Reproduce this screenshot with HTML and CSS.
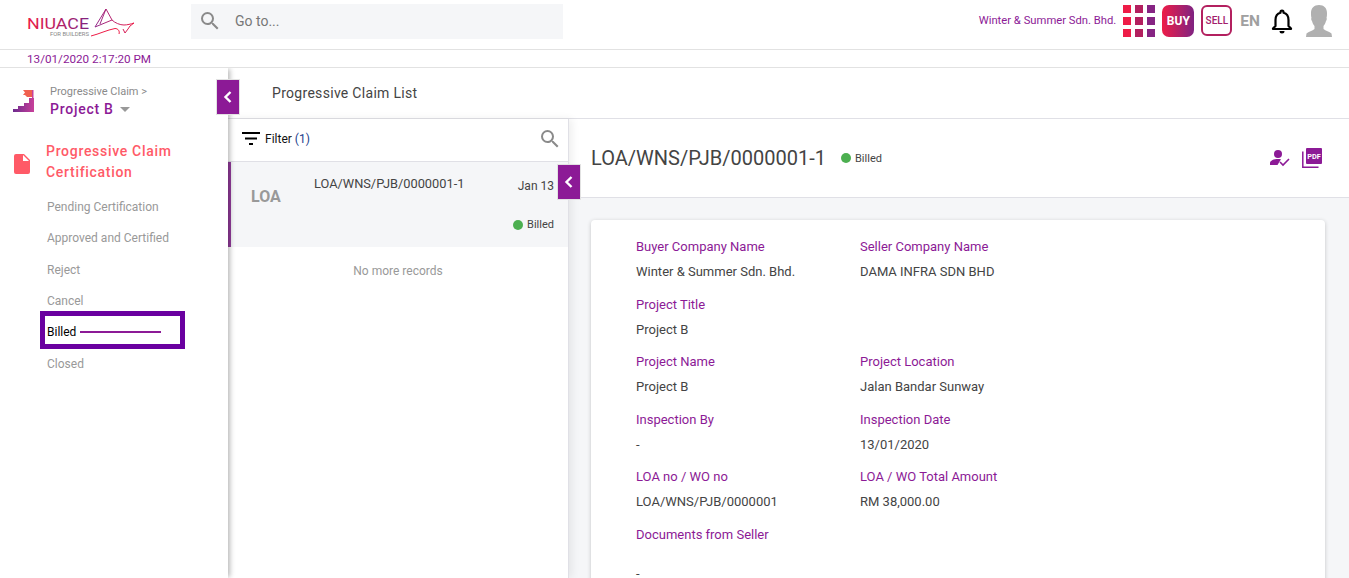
FILE: index.html
```html
<!DOCTYPE html>
<html lang="en">
<head>
<meta charset="utf-8">
<title>Progressive Claim List</title>
<link rel="stylesheet" href="styles.css">
</head>
<body>
<svg class="defs" width="0" height="0" aria-hidden="true">
  <defs>
    <linearGradient id="brand" x1="0" y1="0" x2="1" y2="0">
      <stop offset="0" stop-color="#6d2a8e"/>
      <stop offset="1" stop-color="#c8409a"/>
    </linearGradient>
    <linearGradient id="logoName" gradientUnits="userSpaceOnUse" x1="0" y1="0" x2="62" y2="0">
      <stop offset="0" stop-color="#ee1c47"/>
      <stop offset="1" stop-color="#7f2382"/>
    </linearGradient>
    <linearGradient id="logoBull" gradientUnits="userSpaceOnUse" x1="66" y1="0" x2="108" y2="0">
      <stop offset="0" stop-color="#8c2a8e"/>
      <stop offset="1" stop-color="#ee1c47"/>
    </linearGradient>
  </defs>
</svg>
<header class="topbar">
  <div class="logo">
    <svg width="108" height="30" viewBox="0 0 108 30">
      <text x="0" y="21" class="logo-name" fill="url(#logoName)" textLength="62" lengthAdjust="spacingAndGlyphs">NIUACE</text>
      <text x="23" y="27.500" class="logo-sub" textLength="39" lengthAdjust="spacingAndGlyphs">FOR BUILDERS</text>
      <path d="M68 19 L79 1 L85 12 C88 15 93 17 97 17 C100 17 104 16 107 15 L103 18 L101 21 L98 25 L96 21 M68 19 L85 12 M79 1 L73 16" fill="none" stroke="url(#logoBull)" stroke-width="1"/>
      <path d="M64 28 C72 26 80 22 88 20.500 C91 20.500 93 23 92 26" fill="none" stroke="#ee1c47" stroke-width="1"/>
    </svg>
  </div>
  <div class="search">
    <svg class="search-icon" width="24" height="24" viewBox="0 0 24 24"><path fill="#8a8a8a" d="M15.500 14h-.79l-.28-.27A6.470 6.470 0 0 0 16 9.500 6.500 6.500 0 1 0 9.500 16c1.610 0 3.090-.59 4.230-1.570l.27.28v.79l5 4.990L20.490 19l-4.990-5zm-6 0C7.010 14 5 11.990 5 9.500S7.010 5 9.500 5 14 7.010 14 9.500 11.990 14 9.500 14z"/></svg>
    <span>Go to...</span>
  </div>
  <div class="top-actions">
    <span class="company">Winter &amp; Summer Sdn. Bhd.</span>
    <div class="grid-icon">
      <i class="c1"></i><i class="c2"></i><i class="c3"></i>
      <i class="c1"></i><i class="c2"></i><i class="c3"></i>
      <i class="c1"></i><i class="c2"></i><i class="c3"></i>
    </div>
    <div class="buy">BUY</div>
    <div class="sell"><span>SELL</span></div>
    <span class="lang">EN</span>
    <svg class="bell" width="24" height="26" viewBox="0 0 24 26"><path d="M12 2.500a1.500 1.500 0 0 1 1.500 1.500v.7C17 5.500 18.500 8.500 18.500 12v6l2.500 2.500v.5H3v-.5L5.500 18v-6c0-3.500 1.500-6.500 5-7.300V4A1.500 1.500 0 0 1 12 2.500z" fill="#fff" stroke="#000" stroke-width="2.200" stroke-linejoin="round"/><path d="M9.500 23h5a2.500 2.500 0 0 1-5 0z" fill="#000"/></svg>
    <svg class="avatar" width="28" height="32" viewBox="0 0 28 32"><path fill="#b0b0b0" d="M14 0c5 0 8 3 8 8 0 2 0 3-.5 5 .6.500.3 2-.5 3-.500 2-1.500 4-2.500 5v3c2 2 6 2.500 8 4.500L27 32H1l.5-3.500c2-2 6-2.500 8-4.500v-3c-1-1-2-3-2.500-5-.8-1-1.100-2.500-.5-3C6 11 6 10 6 8c0-5 3-8 8-8z"/></svg>
  </div>
</header>
<div class="datebar">13/01/2020 2:17:20 PM</div>
<div class="layout">
  <aside class="sidebar">
    <div class="project">
      <svg class="stair" width="22" height="26" viewBox="0 0 22 26">
        <path d="M11 2h9v7h-5l-2-2h-2l2-2.500z" fill="#f0604f"/>
        <rect x="20" y="2" width="1.500" height="8" fill="#c8409a"/>
        <path d="M1 24v-3h5v-3h6v-3h5v-5h5v14z" fill="url(#brand)"/>
      </svg>
      <div>
        <div class="crumb">Progressive Claim &gt;</div>
        <div class="project-name">Project B <span class="caret"></span></div>
      </div>
    </div>
    <div class="collapse side-collapse"><svg width="10" height="12" viewBox="0 0 10 12"><path d="M7.500 1 2.500 6l5 5" fill="none" stroke="#fff" stroke-width="2.400"/></svg></div>
    <div class="menu-head">
      <svg width="16" height="20" viewBox="0 0 16 20"><path fill="#ff5a67" d="M2 0h8l6 6v12a2 2 0 0 1-2 2H2a2 2 0 0 1-2-2V2a2 2 0 0 1 2-2z"/><path fill="#fff" d="M9 1v6h6z"/></svg>
      <div class="menu-title">Progressive Claim Certification</div>
    </div>
    <ul class="menu">
      <li>Pending Certification</li>
      <li>Approved and Certified</li>
      <li class="reject">Reject</li>
      <li>Cancel</li>
      <li class="active">Billed<span class="mark-box"></span><span class="mark-line"></span></li>
      <li>Closed</li>
    </ul>
  </aside>
  <main class="main">
    <div class="page-title">Progressive Claim List</div>
    <div class="panes">
      <section class="list-pane">
        <div class="filter">
          <svg width="18" height="14" viewBox="0 0 18 14"><path d="M0 1h18M3 6.500h12M7 12h4" stroke="#000" stroke-width="2"/></svg>
          <span class="filter-text">Filter <em>(1)</em></span>
          <svg class="filter-search" width="24" height="24" viewBox="0 0 24 24"><path fill="#8a8a8a" d="M15.500 14h-.79l-.28-.27A6.470 6.470 0 0 0 16 9.500 6.500 6.500 0 1 0 9.500 16c1.610 0 3.090-.59 4.230-1.570l.27.28v.79l5 4.990L20.490 19l-4.990-5zm-6 0C7.010 14 5 11.990 5 9.500S7.010 5 9.500 5 14 7.010 14 9.500 11.990 14 9.500 14z"/></svg>
        </div>
        <div class="item">
          <div class="item-type">LOA</div>
          <div class="item-no">LOA/WNS/PJB/0000001-1</div>
          <div class="item-side">
            <div class="item-date">Jan 13</div>
            <div class="status small"><i></i>Billed</div>
          </div>
        </div>
        <div class="no-more">No more records</div>
        <div class="collapse list-collapse"><svg width="10" height="12" viewBox="0 0 10 12"><path d="M7.500 1 2.500 6l5 5" fill="none" stroke="#fff" stroke-width="2.400"/></svg></div>
      </section>
      <section class="detail">
        <div class="detail-head">
          <h1>LOA/WNS/PJB/0000001-1</h1>
          <div class="status"><i></i>Billed</div>
          <div class="detail-icons">
            <svg width="20" height="18" viewBox="0 0 20 18"><circle cx="8" cy="5" r="4" fill="#8c1a96"/><path d="M0 16v-2c0-2.500 4-4 8-4 1 0 2 .1 3 .3L7.500 16z" fill="#8c1a96"/><path d="M10 13l3 3 6-6" fill="none" stroke="#8c1a96" stroke-width="1.600"/></svg>
            <svg class="pdf" width="20" height="20" viewBox="0 0 20 20"><path d="M.8 3.500v15.700h15.700" fill="none" stroke="#8c1a96" stroke-width="1.500"/><rect x="4" y="0" width="16" height="16" rx="1" fill="#8c1a96"/><text x="5.200" y="10.500" class="pdf-text" textLength="13.500" lengthAdjust="spacingAndGlyphs">PDF</text></svg>
          </div>
        </div>
        <div class="detail-body">
          <div class="card">
            <div class="fields">
              <div class="field"><label>Buyer Company Name</label><span>Winter &amp; Summer Sdn. Bhd.</span></div>
              <div class="field"><label>Seller Company Name</label><span>DAMA INFRA SDN BHD</span></div>
              <div class="field"><label>Project Title</label><span>Project B</span></div>
              <div class="field"></div>
              <div class="field"><label>Project Name</label><span>Project B</span></div>
              <div class="field"><label>Project Location</label><span>Jalan Bandar Sunway</span></div>
              <div class="field"><label>Inspection By</label><span>-</span></div>
              <div class="field"><label>Inspection Date</label><span>13/01/2020</span></div>
              <div class="field"><label>LOA no / WO no</label><span>LOA/WNS/PJB/0000001</span></div>
              <div class="field"><label>LOA / WO Total Amount</label><span>RM 38,000.00</span></div>
              <div class="field"><label>Documents from Seller</label><span class="doc-val">-</span></div>
            </div>
          </div>
        </div>
      </section>
    </div>
  </main>
</div>
</body>
</html>
```

FILE: styles.css
```css
* { box-sizing: border-box; }
html, body { margin: 0; height: 100%; }
body {
  height: 578px;
  overflow: hidden;
  background: #fff;
  color: #444;
  font-family: Roboto, "Liberation Sans", Arial, sans-serif;
  font-size: 13px;
}
.defs { position: absolute; }

/* top bar */
.topbar {
  display: flex;
  align-items: center;
  height: 50px;
  border-bottom: 1px solid #e2e2e2;
  padding: 0 16px 0 27px;
}
.logo { width: 164px; height: 30px; align-self: flex-start; margin-top: 8px; }
.logo svg { display: block; }
.logo-name { font-family: Roboto, sans-serif; font-size: 15.500px; font-weight: 400; }
.logo-sub { font-family: Roboto, sans-serif; font-size: 5px; fill: #888; }
.search {
  display: flex;
  align-items: center;
  gap: 13px;
  width: 372px;
  height: 35px;
  margin-top: -6px;
  padding: 0 0 1px 7px;
  background: #f5f6f8;
  color: #777;
  font-size: 14px;
}
.top-actions {
  display: flex;
  align-items: center;
  margin-left: auto;
  margin-top: -8px;
}
.company { font-size: 11.250px; color: #8c1a96; margin-right: 7px; }
.grid-icon {
  display: grid;
  grid-template-columns: repeat(3, 8px);
  grid-auto-rows: 8px;
  gap: 4px;
  margin-right: 7px;
}
.grid-icon i { display: block; }
.grid-icon .c1 { background: #ee1c47; }
.grid-icon .c2 { background: #b3205f; }
.grid-icon .c3 { background: #862483; }
.buy {
  display: flex;
  align-items: center;
  justify-content: center;
  width: 32px;
  height: 32px;
  border-radius: 7px;
  background: linear-gradient(90deg, #ee1c47, #7f2382);
  color: #fff;
  font-size: 12px;
  font-weight: 700;
  margin-right: 7px;
}
.sell {
  display: flex;
  align-items: center;
  justify-content: center;
  width: 31px;
  height: 31px;
  border: 2px solid #b3205f;
  border-radius: 6px;
  font-size: 10px;
  font-weight: 500;
  color: #a3206c;
  margin-right: 8px;
}
.lang { font-size: 15.500px; font-weight: 700; color: #a0a0a0; margin-right: 10px; }
.bell { margin-right: 11px; }

.datebar {
  height: 18px;
  padding-left: 27px;
  border-bottom: 1px solid #e2e2e2;
  font-size: 11.700px;
  line-height: 18px;
  color: #8c1a96;
}

/* layout */
.layout { display: flex; height: 510px; }
.sidebar {
  position: relative;
  flex: none;
  width: 228px;
  padding-top: 19px;
  background: #fff;
  box-shadow: 3px 0 5px -1px rgba(0, 0, 0, .28);
  clip-path: inset(0 -20px 0 0);
  z-index: 2;
}
.project { display: flex; padding-left: 12px; gap: 16px; }
.stair { margin-top: 1px; }
.crumb { font-size: 11px; color: #8a8a8a; line-height: 11px; margin-top: -1px; }
.project-name {
  margin-top: 4px;
  font-size: 14px;
  font-weight: 500;
  letter-spacing: .75px;
  line-height: 17px;
  color: #8c1a96;
}
.caret {
  display: inline-block;
  margin-left: 2px;
  vertical-align: 2px;
  border-left: 5px solid transparent;
  border-right: 5px solid transparent;
  border-top: 5px solid #999;
}
.collapse {
  position: absolute;
  display: flex;
  align-items: center;
  justify-content: center;
  width: 24px;
  height: 36px;
  background: #8c1a96;
  border: 1px solid #e2e2e2;
}
.side-collapse { left: 216px; top: 11px; }
.menu-head { display: flex; gap: 16px; padding: 23px 0 0 14px; }
.menu-head svg { margin-top: 13px; flex: none; }
.menu-title {
  width: 150px;
  font-size: 14px;
  font-weight: 500;
  letter-spacing: .7px;
  line-height: 21px;
  color: #ff5a67;
}
.menu { list-style: none; margin: 9px 0 0; padding: 0 0 0 47px; }
.menu li { height: 31.400px; line-height: 31.400px; font-size: 12px; color: #999; position: relative; }
.menu .reject { line-height: 30px; }
.menu .active { color: #000; line-height: 28px; }
.mark-box {
  position: absolute;
  left: -7px;
  top: -7px;
  width: 145px;
  height: 38px;
  border: 5px solid #6a00a0;
}
.mark-line {
  position: absolute;
  left: 33px;
  top: 13px;
  width: 81px;
  height: 2px;
  background: #8c1a96;
}

/* main */
.main { flex: 1; display: flex; flex-direction: column; min-width: 0; }
.page-title {
  height: 51px;
  padding-left: 44px;
  line-height: 50px;
  font-size: 14px;
  letter-spacing: .3px;
  color: #444;
  border-bottom: 1px solid #e0e0e6;
}
.panes { flex: 1; display: flex; min-height: 0; }
.list-pane {
  position: relative;
  z-index: 1;
  flex: none;
  width: 341px;
  background: #fff;
  border-right: 1px solid #e0e0e6;
  box-shadow: 3px 0 8px rgba(0, 0, 0, .07);
}
.filter {
  display: flex;
  align-items: center;
  height: 43px;
  padding: 0 6px 2px 14px;
  border-bottom: 1px solid #e0e0e6;
}
.filter-text { margin-left: 5px; font-size: 12px; color: #111; }
.filter-text em { font-style: normal; color: #1a3e8c; }
.filter-search { margin-left: auto; }
.item {
  display: flex;
  height: 85px;
  background: #f5f6f8;
  border-left: 3px solid #933b9c;
  font-size: 12px;
}
.item-type {
  width: 83px;
  padding: 25px 0 0 20px;
  font-size: 16px;
  font-weight: 700;
  color: #999;
  flex: none;
}
.item-no { padding-top: 14px; font-size: 12.800px; color: #444; }
.item-side {
  margin-left: auto;
  padding: 17px 14px 0 0;
  text-align: right;
  color: #444;
}
.status { display: flex; align-items: center; gap: 4px; font-size: 11px; color: #444; }
.status i { width: 10px; height: 10px; border-radius: 50%; background: #4caf50; }
.status.small { justify-content: flex-end; margin-top: 25px; }
.no-more { margin-top: 17px; text-align: center; font-size: 12px; color: #999; }
.list-collapse { left: 329px; top: 45px; height: 36px; }
.detail { flex: 1; min-width: 0; display: flex; flex-direction: column; }
.detail-head {
  display: flex;
  align-items: center;
  height: 79px;
  flex: none;
  padding: 0 27px 0 22px;
  border-bottom: 1px solid #e0e0e6;
}
.detail-head h1 { margin: 0 15px 0 0; font-size: 20px; font-weight: 400; color: #444; }
.detail-icons { margin-left: auto; display: flex; align-items: center; gap: 12px; }
.pdf-text { font-family: Roboto, sans-serif; font-size: 7px; font-weight: 700; fill: #fff; }
.detail-body { flex: 1; background: #f5f6f8; padding: 22px 24px 0 22px; overflow: hidden; }
.card {
  height: 600px;
  background: #fff;
  border-radius: 4px;
  box-shadow: 0 1px 4px rgba(0, 0, 0, .2);
  padding: 18px 45px;
}
.fields { display: grid; grid-template-columns: 224px 1fr; grid-auto-rows: 57.500px; }
.field label { display: block; font-size: 13px; color: #8c1a96; line-height: 17px; }
.field span { display: block; margin-top: 8px; font-size: 13px; color: #444; line-height: 17px; }
.field .doc-val { margin-top: 22px; }
```
